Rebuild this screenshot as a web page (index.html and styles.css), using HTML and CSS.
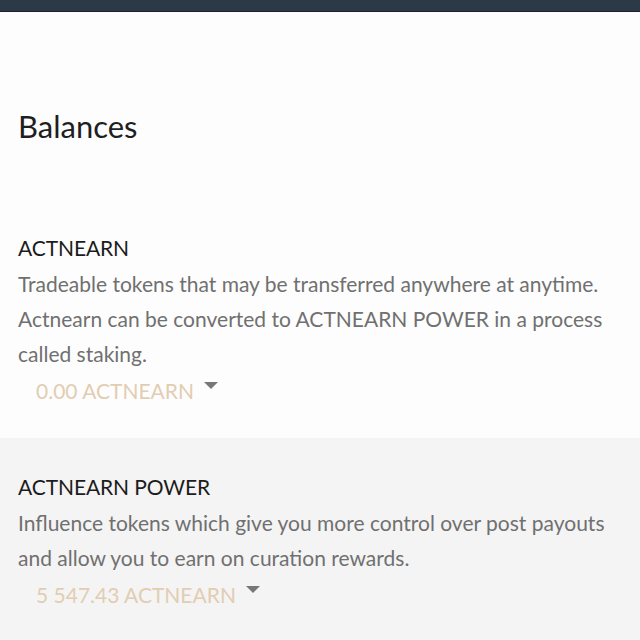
FILE: index.html
```html
<!DOCTYPE html>
<html>
<head>
<meta charset="utf-8">
<link rel="stylesheet" href="styles.css">
</head>
<body>
<div class="topbar"></div>
<div class="page">
  <h1 class="title">Balances</h1>
  <section class="row">
    <h2 class="row-title">ACTNEARN</h2>
    <p class="row-desc">Tradeable tokens that may be transferred anywhere at anytime. Actnearn can be converted to ACTNEARN POWER in a process called staking.</p>
    <div class="amount"><span class="amount-value">0.00 ACTNEARN</span><span class="caret"></span></div>
  </section>
  <section class="row row-alt">
    <h2 class="row-title">ACTNEARN POWER</h2>
    <p class="row-desc">Influence tokens which give you more control over post payouts and allow you to earn on curation rewards.</p>
    <div class="amount"><span class="amount-value">5 547.43 ACTNEARN</span><span class="caret"></span></div>
  </section>
</div>
</body>
</html>
```
FILE: styles.css
```css
html, body {
  margin: 0;
  padding: 0;
  background: #fdfdfd;
  font-family: "Lato", "Open Sans", sans-serif;
  width: 640px;
  height: 640px;
  overflow: hidden;
}
.topbar {
  height: 11px;
  background: #2c3a47;
  border-bottom: 1px solid #1a242c;
}
.page {
  display: flex;
  flex-direction: column;
  height: 628px;
}
.title {
  margin: 94px 18px 0;
  font-size: 31px;
  line-height: 40px;
  font-weight: 400;
  color: #1f1f1f;
}
.row {
  padding: 0 18px 30px;
}
.row:first-of-type {
  margin-top: 87px;
}
.row-alt {
  flex: 1;
  background: #f4f4f4;
  padding-top: 34px;
  padding-bottom: 0;
}
.row-title {
  margin: 0;
  font-size: 21px;
  line-height: 30px;
  font-weight: 400;
  letter-spacing: -0.1px;
  color: #1c1c1c;
}
.row-desc {
  margin: 3px 0 0;
  font-size: 21px;
  line-height: 35px;
  color: #707070;
}
.amount {
  margin-top: 2px;
  padding-left: 18px;
  display: flex;
  align-items: flex-start;
  font-size: 21px;
  line-height: 35px;
}
.amount-value {
  color: #e2cdb2;
}
.caret {
  width: 0;
  height: 0;
  margin: 9px 0 0 10px;
  border-left: 7.5px solid transparent;
  border-right: 7.5px solid transparent;
  border-top: 7px solid #777;
}
```
